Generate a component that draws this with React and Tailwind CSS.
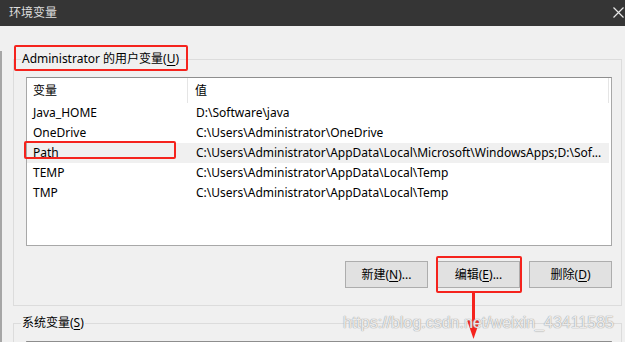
import React from 'react';

const ROWS = [
  { name: 'Java_HOME', value: 'D:\\Software\\java' },
  { name: 'OneDrive', value: 'C:\\Users\\Administrator\\OneDrive' },
  { name: 'Path', value: 'C:\\Users\\Administrator\\AppData\\Local\\Microsoft\\WindowsApps;D:\\Sof...', selected: true },
  { name: 'TEMP', value: 'C:\\Users\\Administrator\\AppData\\Local\\Temp' },
  { name: 'TMP', value: 'C:\\Users\\Administrator\\AppData\\Local\\Temp' },
];

function Btn({ label, mnemonic, suffix }) {
  return (
    <button className="w-[83px] h-[27px] bg-[#e1e1e1] border border-[#adadad] text-[12px] text-black flex items-center justify-center">
      {label}(<span className="underline underline-offset-2">{mnemonic}</span>){suffix}
    </button>
  );
}

export default function App() {
  return (
    <div
      className="relative w-[625px] h-[342px] overflow-hidden bg-[#f0f0f0] text-black"
      style={{ fontFamily: '"Noto Sans", "Noto Sans CJK SC", sans-serif' }}
    >
      {/* title bar */}
      <div className="h-[26px] bg-[#353535] flex items-center justify-between pl-[9px] pr-[1px]">
        <span className="text-[12px] text-[#dedede]">环境变量</span>
        <svg width="11" height="11" viewBox="0 0 11 11" className="mt-[-2px]">
          <path d="M0.5 0.5 L10.5 10.5 M10.5 0.5 L0.5 10.5" stroke="#e6e6e6" strokeWidth="1.2" />
        </svg>
      </div>

      <div className="border-l-2 border-[#a6a6a6] pl-[11px] h-[316px]">
        {/* user vars */}
        <fieldset className="w-[609px] border border-[#dcdcdc] mt-[25px]">
          <legend className="ml-[7px] px-[1px] text-[12px] leading-[16px]">
            Administrator 的用户变量(<span className="underline underline-offset-2">U</span>)
          </legend>
          <div className="pl-[12px] pr-[9px] pt-[10px] pb-[17px]">
            <div className="h-[169px] bg-white border border-[#a8a8a8] border-t-[#8e8e8e] text-[12px]">
              <div className="h-[25px] flex items-center">
                <div className="w-[161px] h-full pl-[6px] flex items-center border-r border-[#e5e5e5]">变量</div>
                <div className="flex-1 h-full pl-[7px] flex items-center border-r border-[#e5e5e5] mr-[2px]">值</div>
              </div>
              {ROWS.map((r) => (
                <div key={r.name} className={`h-[20px] flex items-center mr-[2px] ${r.selected ? 'bg-[#f0f0f0]' : ''}`}>
                  <div className="w-[162px] pl-[6px] whitespace-nowrap">{r.name}</div>
                  <div className="flex-1 pl-[7px] whitespace-nowrap overflow-hidden">{r.value}</div>
                </div>
              ))}
            </div>
            <div className="flex justify-end gap-[9px] mt-[15px]">
              <Btn label="新建" mnemonic="N" suffix="..." />
              <Btn label="编辑" mnemonic="E" suffix="..." />
              <Btn label="删除" mnemonic="D" />
            </div>
          </div>
        </fieldset>

        {/* system vars */}
        <fieldset className="w-[609px] border border-[#dcdcdc] mt-[9px] h-[60px]">
          <legend className="ml-[7px] px-[1px] text-[12px] leading-[16px]">
            系统变量(<span className="underline underline-offset-2">S</span>)
          </legend>
          <div className="pl-[12px] pr-[9px] pt-[10px]">
            <div className="h-[40px] bg-white border border-[#a8a8a8] border-t-[#8e8e8e]" />
          </div>
        </fieldset>
      </div>

      {/* annotations */}
      <div className="absolute left-[14px] top-[45px] w-[174px] h-[26px] border-2 border-[#f5231d] rounded-[2px]" />
      <div className="absolute left-[24px] top-[141px] w-[152px] h-[18px] border-2 border-[#f5231d] rounded-[2px]" />
      <div className="absolute left-[436px] top-[256px] w-[86px] h-[37px] border-2 border-[#f5231d] rounded-[2px]" />
      <svg className="absolute left-[464px] top-[293px]" width="20" height="49" viewBox="0 0 20 49">
        <rect x="8" y="0" width="3" height="29" fill="#f5231d" />
        <polygon points="3,27 16,27 9.5,46" fill="#f5231d" />
      </svg>

      <div className="absolute left-[343px] top-[313px] text-[16px] leading-[20px] text-white/80 [text-shadow:0_0_1px_#9a9a9a,0_0_1px_#9a9a9a] whitespace-nowrap" style={{ fontFamily: '"Liberation Sans", sans-serif' }}>
        https://blog.csdn.net/weixin_43411585
      </div>
    </div>
  );
}
